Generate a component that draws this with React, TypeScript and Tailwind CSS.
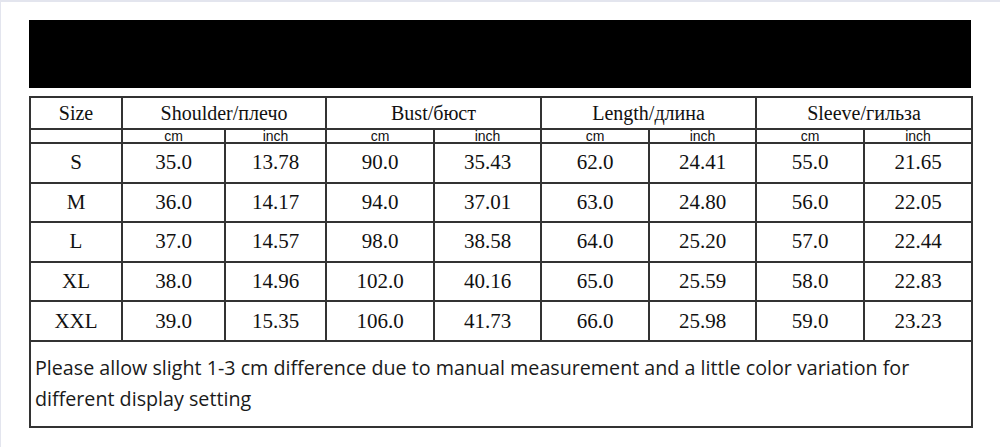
import React from "react";

const rows = [
  ["S", "35.0", "13.78", "90.0", "35.43", "62.0", "24.41", "55.0", "21.65"],
  ["M", "36.0", "14.17", "94.0", "37.01", "63.0", "24.80", "56.0", "22.05"],
  ["L", "37.0", "14.57", "98.0", "38.58", "64.0", "25.20", "57.0", "22.44"],
  ["XL", "38.0", "14.96", "102.0", "40.16", "65.0", "25.59", "58.0", "22.83"],
  ["XXL", "39.0", "15.35", "106.0", "41.73", "66.0", "25.98", "59.0", "23.23"],
];

const widths = [92, 103, 101, 108, 107, 108, 107, 108, 108];
const heads = ["Shoulder/плечо", "Bust/бюст", "Length/длина", "Sleeve/гильза"];

const serif = "font-['Liberation_Serif','Times_New_Roman',serif]";
const sans = "font-['Liberation_Sans',Arial,sans-serif]";

export default function App() {
  return (
    <div className="w-[1000px] h-[447px] bg-white border-t-2 border-l border-[#e3e5ee] overflow-hidden">
      <div className="pl-[28px] pt-[18px]">
        <div className="w-[942px] h-[68px] bg-black" />
        <div className="h-[8px]" />
        <table className="table-fixed border-collapse text-[#111]" style={{ width: 942 }}>
          <colgroup>
            {widths.map((w, i) => (
              <col key={i} style={{ width: w }} />
            ))}
          </colgroup>
          <tbody>
            <tr className="h-[32px]">
              <td className={`border-2 border-[#333] text-center text-[20px] leading-none ${serif}`}>Size</td>
              {heads.map((h) => (
                <td key={h} colSpan={2} className={`border-2 border-[#333] text-center text-[20px] leading-none ${serif}`}>
                  {h}
                </td>
              ))}
            </tr>
            <tr className="h-[13px]">
              <td className="border-2 border-[#333] p-0" />
              {heads.map((h) => (
                <React.Fragment key={h}>
                  <td className={`border-2 border-[#333] p-0 text-center text-[14px] leading-[12px] ${sans}`}>cm</td>
                  <td className={`border-2 border-[#333] p-0 text-center text-[14px] leading-[12px] ${sans}`}>inch</td>
                </React.Fragment>
              ))}
            </tr>
            {rows.map((r) => (
              <tr key={r[0]} className="h-[39.6px]">
                {r.map((c, i) => (
                  <td key={i} className={`border-2 border-[#333] p-0 text-center text-[21px] leading-none ${serif}`}>
                    {c}
                  </td>
                ))}
              </tr>
            ))}
            <tr className="h-[86px]">
              <td
                colSpan={9}
                className="border-2 border-[#333] px-[4px] pt-[10px] pb-[6px] align-top text-[19.7px] leading-[31px] text-[#1a1a1a] font-['Open_Sans','Noto_Sans',sans-serif]"
              >
                Please allow slight 1-3 cm difference due to manual measurement and a little color variation for
                different display setting
              </td>
            </tr>
          </tbody>
        </table>
      </div>
    </div>
  );
}
